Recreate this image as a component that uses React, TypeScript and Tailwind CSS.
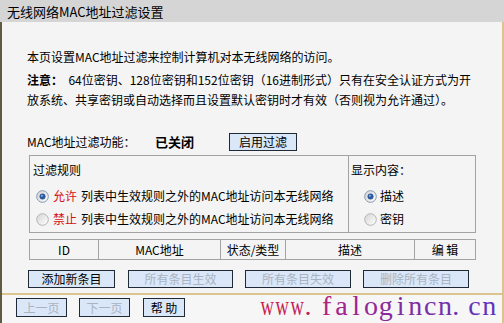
import React from 'react';

interface BtnProps {
  children: React.ReactNode;
  disabled?: boolean;
  className?: string;
}

// XP 风格按钮
const Btn: React.FC<BtnProps> = ({ children, disabled = false, className = '' }) => (
  <div
    className={`flex items-center justify-center border border-[#1f2a36] bg-[#d9e7f9] text-[12px] leading-none ${
      disabled ? 'text-[#a9b3c1]' : 'text-black'
    } ${className}`}
  >
    {children}
  </div>
);

const Radio: React.FC<{ checked?: boolean }> = ({ checked = false }) => (
  <svg width="13" height="13" viewBox="0 0 13 13" className="shrink-0">
    <defs>
      <linearGradient id="radioFill" x1="0" y1="0" x2="1" y2="1">
        <stop offset="0" stopColor="#d4d4d4" />
        <stop offset="1" stopColor="#ffffff" />
      </linearGradient>
    </defs>
    <circle
      cx="6.5"
      cy="6.5"
      r="5.8"
      fill="url(#radioFill)"
      stroke={checked ? '#8297b0' : '#b4b4b4'}
      strokeWidth="1"
    />
    {checked && <circle cx="6.5" cy="6.5" r="3" fill="#2f5b9c" />}
    {checked && <circle cx="5.9" cy="5.8" r="1" fill="#8fb0e0" />}
  </svg>
);

// 水印：等宽字格，颜色由红渐变到紫
const watermark: { c: string; cls: string }[] = [
  { c: 'w', cls: 'text-[#cc1f4d]' },
  { c: 'w', cls: 'text-[#c91f52]' },
  { c: 'w', cls: 'text-[#c42058]' },
  { c: '.', cls: 'text-[#bc2160]' },
  { c: 'f', cls: 'text-[#ac2282]' },
  { c: 'a', cls: 'text-[#a2248e]' },
  { c: 'l', cls: 'text-[#9a2694]' },
  { c: 'o', cls: 'text-[#922898]' },
  { c: 'g', cls: 'text-[#8a2a9c]' },
  { c: 'i', cls: 'text-[#842ba0]' },
  { c: 'n', cls: 'text-[#7e2da4]' },
  { c: 'c', cls: 'text-[#782ea8]' },
  { c: 'n', cls: 'text-[#7230ac]' },
  { c: '.', cls: 'text-[#6c31b2]' },
  { c: 'c', cls: 'text-[#6732b8]' },
  { c: 'n', cls: 'text-[#6233be]' },
];

export default function App() {
  return (
    <div className="relative w-[504px] h-[323px] overflow-hidden bg-[#f4f4f4] font-['Noto_Sans_CJK_SC',sans-serif] text-[12px] text-black">
      {/* 标题栏 */}
      <div className="h-[22px] bg-[#d5d5d5] flex items-center pl-[7px] text-[13px] leading-none">
        无线网络MAC地址过滤设置
      </div>

      <div className="h-[301px] border-l-2 border-l-[#5e5b40] border-r-2 border-r-[#dcc48e] flex flex-col">
        <div className="h-[271px] pl-[25px] flex flex-col">
          <div className="mt-[25px] h-[20px] leading-[20px] whitespace-nowrap">
            本页设置MAC地址过滤来控制计算机对本无线网络的访问。
          </div>
          <div className="mt-[3px] h-[20px] leading-[20px] whitespace-pre">
            <span className="font-bold">注意：</span>
            {'  64位密钥、128位密钥和152位密钥（16进制形式）只有在安全认证方式为开'}
          </div>
          <div className="h-[20px] leading-[20px] whitespace-nowrap">
            放系统、共享密钥或自动选择而且设置默认密钥时才有效（否则视为允许通过）。
          </div>

          <div className="mt-[23px] h-[18px] flex items-center">
            <span className="w-[128px] whitespace-nowrap">MAC地址过滤功能：</span>
            <span className="w-[74px] font-bold text-[13px]">已关闭</span>
            <Btn className="w-[68px] h-[18px]">启用过滤</Btn>
          </div>

          {/* 过滤规则 / 显示内容 */}
          <div className="mt-[4px] ml-[2px] w-[447px] h-[78px] border border-[#a3a3a3] flex">
            <div className="w-[319px] border-r border-[#a3a3a3] flex flex-col">
              <div className="mt-[4px] h-[20px] leading-[20px] pl-[3px]">过滤规则</div>
              <div className="mt-[6px] h-[20px] flex items-center gap-[4px] pl-[6px] whitespace-nowrap">
                <Radio checked />
                <span className="text-[#d81010]">允许</span>
                <span>列表中生效规则之外的MAC地址访问本无线网络</span>
              </div>
              <div className="mt-[3px] h-[20px] flex items-center gap-[4px] pl-[6px] whitespace-nowrap">
                <Radio />
                <span className="text-[#d81010]">禁止</span>
                <span>列表中生效规则之外的MAC地址访问本无线网络</span>
              </div>
            </div>
            <div className="flex-1 flex flex-col">
              <div className="mt-[4px] h-[20px] leading-[20px] pl-[2px]">显示内容：</div>
              <div className="mt-[6px] h-[20px] flex items-center gap-[3px] pl-[15px]">
                <Radio checked />
                <span>描述</span>
              </div>
              <div className="mt-[3px] h-[20px] flex items-center gap-[3px] pl-[15px]">
                <Radio />
                <span>密钥</span>
              </div>
            </div>
          </div>

          {/* 表头 */}
          <div className="mt-[6px] ml-[2px] w-[447px] h-[21px] border border-[#a3a3a3] flex leading-none">
            <div className="w-[68px] flex items-center justify-center">ID</div>
            <div className="w-[122px] border-l border-[#a3a3a3] flex items-center justify-center">MAC地址</div>
            <div className="w-[65px] border-l border-[#a3a3a3] flex items-center justify-center">状态/类型</div>
            <div className="w-[129px] border-l border-[#a3a3a3] flex items-center justify-center">描述</div>
            <div className="w-[61px] border-l border-[#a3a3a3] flex items-center justify-center">编 辑</div>
          </div>

          <div className="mt-[10px] ml-[1px] flex">
            <Btn className="w-[87px] h-[18px]">添加新条目</Btn>
            <Btn disabled className="ml-[13px] w-[105px] h-[18px]">所有条目生效</Btn>
            <Btn disabled className="ml-[12px] w-[106px] h-[18px]">所有条目失效</Btn>
            <Btn disabled className="ml-[12px] w-[106px] h-[18px]">删除所有条目</Btn>
          </div>
        </div>

        {/* 底部翻页 */}
        <div className="h-[30px] border-t-2 border-t-[#dcc48e] bg-[#f6f6f6] pl-[14px] pt-[3px] flex items-start">
          <Btn disabled className="w-[51px] h-[19px]">上一页</Btn>
          <Btn disabled className="ml-[12px] w-[51px] h-[19px]">下一页</Btn>
          <Btn className="ml-[13px] w-[42px] h-[19px] whitespace-pre">帮 助</Btn>
        </div>
      </div>

      {/* 水印 */}
      <div className="absolute left-[260px] top-[292px] flex font-['Liberation_Serif',serif] text-[28px] leading-[28px]">
        {watermark.map((w, i) => (
          <span
            key={i}
            className={`flex w-[14.8px] ${w.c === '.' ? 'justify-start' : 'justify-center'} ${w.cls}`}
          >
            <span className={w.c === 'w' ? 'inline-block scale-x-[0.66]' : ''}>{w.c}</span>
          </span>
        ))}
      </div>
    </div>
  );
}
